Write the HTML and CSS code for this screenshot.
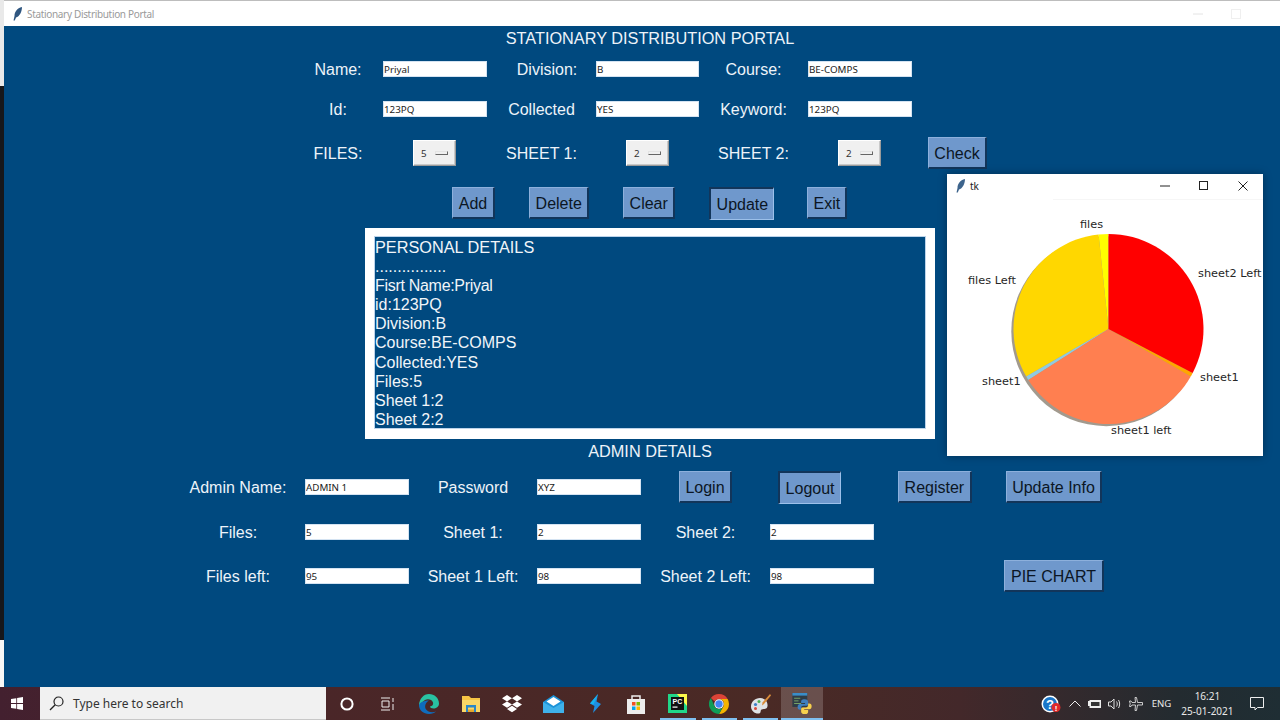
FILE: index.html

```html
<!DOCTYPE html>
<html lang="en">
<head>
<meta charset="UTF-8">
<title>Stationary Distribution Portal</title>
<link rel="stylesheet" href="styles.css">
</head>
<body>
<div class="desktop">
  <div class="edge">
    <div class="edge-top"></div>
    <div class="edge-mid"></div>
    <div class="edge-bottom"></div>
  </div>

  <div class="window">
    <div class="titlebar">
      <svg class="feather" width="10" height="14" viewBox="0 0 10 14"><path d="M9 0C4 1 1.500 5 1.500 9L.5 13.500 1.800 13.500 3 10.500C6.500 9.500 9 5 9 0Z" fill="#2f5680"/></svg>
      <span class="titlebar-text">Stationary Distribution Portal</span>
      <span class="win-controls">
        <svg width="10" height="10" viewBox="0 0 10 10"><path d="M0 5H10" stroke="#e4e4e4"/></svg>
        <svg width="10" height="10" viewBox="0 0 10 10"><rect x=".5" y=".5" width="9" height="9" fill="none" stroke="#efefef"/></svg>
      </span>
    </div>

    <div class="app">
      <h1 class="heading">STATIONARY DISTRIBUTION PORTAL</h1>

      <div class="top-grid">
        <label>Name:</label>
        <input class="field" value="Priyal">
        <label class="shift">Division:</label>
        <input class="field" value="B">
        <label>Course:</label>
        <input class="field" value="BE-COMPS">
        <span></span>
        <span></span>

        <label>Id:</label>
        <input class="field" value="123PQ">
        <label>Collected</label>
        <input class="field" value="YES">
        <label>Keyword:</label>
        <input class="field" value="123PQ">
        <span></span>
        <span></span>

        <label>FILES:</label>
        <div class="option"><span>5</span><i class="option-mark"></i></div>
        <label>SHEET 1:</label>
        <div class="option"><span>2</span><i class="option-mark"></i></div>
        <label>SHEET 2:</label>
        <div class="option"><span>2</span><i class="option-mark"></i></div>
        <span></span>
        <button class="btn">Check</button>
      </div>

      <div class="actions">
        <button class="btn">Add</button>
        <button class="btn">Delete</button>
        <button class="btn">Clear</button>
        <button class="btn sunken">Update</button>
        <button class="btn">Exit</button>
      </div>

      <div class="details-frame">
        <div class="details">
          <div class="details-head">PERSONAL DETAILS</div>
          <div>................</div>
          <div class="tight">Fisrt Name:Priyal</div>
          <div>id:123PQ</div>
          <div>Division:B</div>
          <div>Course:BE-COMPS</div>
          <div>Collected:YES</div>
          <div>Files:5</div>
          <div>Sheet 1:2</div>
          <div>Sheet 2:2</div>
        </div>
      </div>

      <h2 class="heading admin-heading">ADMIN DETAILS</h2>

      <div class="admin-grid">
        <label class="first">Admin Name:</label>
        <input class="field lift" value="ADMIN 1">
        <label class="first">Password</label>
        <input class="field lift" value="XYZ">
        <button class="btn center">Login</button>
        <button class="btn sunken logout">Logout</button>
        <button class="btn register">Register</button>
        <button class="btn center">Update Info</button>

        <label>Files:</label>
        <input class="field" value="5">
        <label>Sheet 1:</label>
        <input class="field" value="2">
        <label>Sheet 2:</label>
        <input class="field" value="2">
        <span></span>
        <span></span>

        <label>Files left:</label>
        <input class="field" value="95">
        <label>Sheet 1 Left:</label>
        <input class="field" value="98">
        <label>Sheet 2 Left:</label>
        <input class="field" value="98">
        <span></span>
        <button class="btn center">PIE CHART</button>
      </div>
    </div>
  </div>

  <!-- matplotlib popup floats over the main window -->
  <div class="popup">
    <div class="popup-bar">
      <svg class="feather" width="10" height="14" viewBox="0 0 10 14"><path d="M9 0C4 1 1.500 5 1.500 9L.5 13.500 1.800 13.500 3 10.500C6.500 9.500 9 5 9 0Z" fill="#3d648c"/></svg>
      <span class="popup-title">tk</span>
      <span class="popup-controls">
        <svg width="10" height="10" viewBox="0 0 10 10"><path d="M0 5H10" stroke="#222"/></svg>
        <svg width="10" height="10" viewBox="0 0 10 10"><rect x=".5" y=".5" width="8" height="8" fill="none" stroke="#222"/></svg>
        <svg width="10" height="10" viewBox="0 0 10 10"><path d="M.5 .5L9.500 9.500M9.500 .5L.5 9.500" stroke="#222"/></svg>
      </span>
    </div>
    <svg class="pie" width="316" height="257" viewBox="0 0 316 257">
      <circle cx="159.300" cy="132.200" r="95" fill="#a29a8e"/>
      <path d="M161.500 130L161.500 35A95 95 0 0 0 151.570 35.520Z" fill="#ffff00"/>
      <path d="M161.500 130L151.570 35.520A95 95 0 0 0 79.230 177.500Z" fill="#ffd700"/>
      <path d="M161.500 130L79.230 177.500A95 95 0 0 0 81.300 180.900Z" fill="#8fcbe0"/>
      <path d="M161.500 130L81.300 180.900A95 95 0 0 0 243.770 177.500Z" fill="#ff7f50"/>
      <path d="M161.500 130L243.770 177.500A95 95 0 0 0 245.690 174Z" fill="#ffa500"/>
      <path d="M161.500 130L245.690 174A95 95 0 0 0 161.500 35Z" fill="#ff0000"/>
      <text x="133" y="29">files</text>
      <text x="21" y="85">files Left</text>
      <text x="251" y="78">sheet2 Left</text>
      <text x="253" y="182">sheet1</text>
      <text x="35" y="186">sheet1</text>
      <text x="164" y="235">sheet1 left</text>
    </svg>
  </div>

  <div class="taskbar">
    <div class="start">
      <svg width="12" height="13" viewBox="0 0 12 13"><path d="M0 2L5.300 1.200V6.100H0ZM6.100 1L12 0V6.100H6.100ZM0 6.900H5.300V11.800L0 11ZM6.100 6.900H12V13L6.100 12Z" fill="#fff"/></svg>
    </div>
    <div class="search">
      <svg width="15" height="15" viewBox="0 0 15 15"><circle cx="9.500" cy="5.500" r="4.500" fill="none" stroke="#222" stroke-width="1.200"/><path d="M6.200 8.800L1 14" stroke="#222" stroke-width="1.300"/></svg>
      <span>Type here to search</span>
    </div>

    <div class="task"><svg width="14" height="14" viewBox="0 0 14 14"><circle cx="7" cy="7" r="5.600" fill="none" stroke="#fff" stroke-width="2"/></svg></div>
    <div class="task"><svg width="14" height="14" viewBox="0 0 14 14"><path d="M0 1H9M0 13H9M1 4H8V10H1ZM12 1V5M12 7V13" fill="none" stroke="#eee" stroke-width="1"/></svg></div>
    <div class="task"><svg width="20" height="20" viewBox="0 0 20 20"><path d="M10 0C15.500 0 20 4 20 9.500 20 13 17 14.500 14.500 14.500 12.500 14.500 11 13.500 11 12.500 13.500 12 14.500 10.500 14 8.500 13 5.500 9 4.500 6 6 2.500 8 1 11 0 13-.5 6 4 0 10 0Z" fill="#29c2a2"/><path d="M0 11C0 16.500 4.500 20 10 20 13 20 15.500 19 17 17.500 13 19 8 18 6.500 14.500 5.500 11.500 7 8 10 6.500 5.500 6.500 1 8 0 11Z" fill="#0f6cbd"/></svg></div>
    <div class="task"><svg width="20" height="20" viewBox="0 0 20 20"><path d="M1 2H8L10 4H19V18H1Z" fill="#f6c445"/><path d="M1 6H19V18H1Z" fill="#fbd767"/><path d="M5 11H15V18H13V13.500H7V18H5Z" fill="#2b88c9"/><rect x="7" y="15.500" width="6" height="2.500" fill="#e5a82e"/></svg></div>
    <div class="task"><svg width="20" height="18" viewBox="0 0 20 18"><path d="M5 0L10 3.200 5 6.400 0 3.200ZM15 0L20 3.200 15 6.400 10 3.200ZM5 6.400L10 9.600 5 12.800 0 9.600ZM15 6.400L20 9.600 15 12.800 10 9.600ZM5 14L10 10.800 15 14 10 17.200Z" fill="#fff"/></svg></div>
    <div class="task"><svg width="21" height="18" viewBox="0 0 21 18"><path d="M0 7L10.500 0 21 7V18H0Z" fill="#1b93d8"/><path d="M3.500 6.500L10.500 2 17.500 6.500 10.500 11Z" fill="#fff"/><path d="M0 7L10.500 13 21 7V18H0Z" fill="#3fb1ea"/></svg></div>
    <div class="task"><svg width="11" height="19" viewBox="0 0 11 19"><path d="M8 0L0 9.500 4.500 12 3 19 11 10 6.500 7.500Z" fill="#1f8fe0"/><path d="M8 0L0 9.500 3.500 10.500Z" fill="#16b4f0"/></svg></div>
    <div class="task"><svg width="20" height="20" viewBox="0 0 20 20"><rect x="1" y="5" width="18" height="15" fill="#ededed"/><path d="M6 5V2H14V5" fill="none" stroke="#ededed" stroke-width="1.500"/><rect x="6" y="8" width="3.500" height="3.500" fill="#f25022"/><rect x="10.500" y="8" width="3.500" height="3.500" fill="#7fba00"/><rect x="6" y="12.500" width="3.500" height="3.500" fill="#00a4ef"/><rect x="10.500" y="12.500" width="3.500" height="3.500" fill="#ffb900"/></svg></div>
    <div class="task running"><svg width="19" height="19" viewBox="0 0 19 19"><path d="M0 0H19V19H0Z" fill="#21d789"/><path d="M9 0H19V12Z" fill="#fcf84a"/><rect x="3" y="3" width="13" height="13" fill="#111"/><text class="pc" x="4.500" y="10">PC</text><rect x="4.500" y="12.500" width="5" height="1.200" fill="#fff"/></svg></div>
    <div class="task running"><svg width="20" height="20" viewBox="0 0 20 20"><path d="M10 0A10 10 0 0 1 18.660 5H10A5 5 0 0 0 5.670 7.500L1.900 4.100A10 10 0 0 1 10 0Z" fill="#db4437"/><path d="M18.660 5A10 10 0 0 1 10 20L14.330 12.500A5 5 0 0 0 10 5Z" fill="#f4b400"/><path d="M1.900 4.100L5.670 12.500A5 5 0 0 0 14.330 12.500L10 20A10 10 0 0 1 1.900 4.100Z" fill="#0f9d58"/><circle cx="10" cy="10" r="4.700" fill="#fff"/><circle cx="10" cy="10" r="3.700" fill="#4285f4"/></svg></div>
    <div class="task running"><svg width="20" height="20" viewBox="0 0 20 20"><path d="M9 4C4 4 0 8 0 12.500 0 17 4 20 8 19.500 10.500 19 9 16.500 10.500 15.500 12.500 14.500 16 16 16.500 12 17 8 14 4 9 4Z" fill="#dfe3e6"/><circle cx="4.500" cy="10.500" r="1.600" fill="#3c7fc8"/><circle cx="8" cy="7.500" r="1.500" fill="#4bb04f"/><circle cx="4.500" cy="14.500" r="1.500" fill="#d64a3b"/><path d="M19 0L20 1.500 13 10 11 11.500 11.500 8.500Z" fill="#d98c3a"/></svg></div>
    <div class="task running active"><svg width="20" height="21" viewBox="0 0 22 24"><rect x="0" y="0" width="17" height="16" fill="#2f3d47"/><rect x="0" y="0" width="17" height="3" fill="#3a8dc8"/><path d="M2 6H9M2 9H7M2 12H10" stroke="#7fb069"/><path d="M14 7C10.500 7 10 8.500 10 10V11.500H14.500V12.500H8.500C7 12.500 6 14 6 16S7 19 8.500 19H10V17C10 15.500 11 14.500 12.500 14.500H16C17.500 14.500 18 13.500 18 12.500V10C18 8.500 17 7 14 7Z" fill="#3f7fbf"/><path d="M14 24C17.500 24 18 22.500 18 21V19.500H13.500V18.500H19.500C21 18.500 22 17 22 15S21 12 19.500 12H18V14C18 15.500 17 16.500 15.500 16.500H12C10.500 16.500 10 17.500 10 18.500V21C10 22.500 11 24 14 24Z" fill="#f7d04d"/></svg></div>

    <div class="tray">
      <svg class="tray-help" width="20" height="18" viewBox="0 0 20 18"><circle cx="9" cy="9" r="8.500" fill="#fff"/><circle cx="9" cy="9" r="7" fill="#1a76c9"/><text class="help-q" x="9" y="13.500">?</text><circle cx="15" cy="12.500" r="4.500" fill="#e02b2b"/><text class="help-bang" x="15" y="15.500">!</text></svg>
      <svg class="tray-chevron" width="12" height="7" viewBox="0 0 12 7"><path d="M.5 6.500L6 1 11.500 6.500" fill="none" stroke="#eee"/></svg>
      <svg class="tray-icon" width="13" height="9" viewBox="0 0 13 9"><path d="M0 2H1.500V1H13V9H1.500V7H0Z" fill="#eee"/><rect x="3" y="3" width="8.500" height="4" fill="#333"/></svg>
      <svg class="tray-icon" width="14" height="12" viewBox="0 0 14 12"><path d="M.5 4H3L6 1V11L3 8H.5ZM8.500 3.500C9.500 5 9.500 7 8.500 8.500M10.500 2C12 4 12 8 10.500 10" fill="none" stroke="#ddd"/></svg>
      <svg class="tray-icon" width="14" height="14" viewBox="0 0 14 14"><path d="M6 .5H7.500L8.500 5.500H13.500V8H8.500L7.500 13.500H6L6.500 8H3L2 9.500H.5L1.200 6.800.5 4H2L3 5.500H6.500Z" fill="none" stroke="#ddd" stroke-width=".9"/></svg>
      <span class="tray-lang">ENG</span>
      <div class="clock"><span>16:21</span><span>25-01-2021</span></div>
      <svg class="tray-note" width="14" height="14" viewBox="0 0 14 14"><path d="M.5 .5H13.500V10.500H7.500L5 13V10.500H.5Z" fill="none" stroke="#eee"/></svg>
    </div>
  </div>
</div>
</body>
</html>
```

FILE: styles.css

```css
* {
  box-sizing: border-box;
}
html, body {
  margin: 0;
  height: 720px;
  overflow: hidden;
}
body {
  font-family: "Liberation Sans", Arial, sans-serif;
  background: #00497f;
}
.desktop {
  position: relative;
  display: grid;
  grid-template-columns: 4px 1fr;
  grid-template-rows: 687px 33px;
  height: 720px;
}

/* sliver of the window behind */
.edge {
  display: flex;
  flex-direction: column;
}
.edge-top {
  height: 86px;
  background: #e9e9e9;
}
.edge-mid {
  flex: 1;
  background: #17171a;
}
.edge-bottom {
  height: 47px;
  background: #f7f7f7;
}

.window {
  display: flex;
  flex-direction: column;
  min-width: 0;
  background: #00497f;
}
.titlebar {
  display: flex;
  align-items: center;
  height: 26px;
  flex-shrink: 0;
  padding-left: 9px;
  background: #fff;
  border-top: 1px solid #bdbdbd;
}
.titlebar-text {
  margin-left: 4px;
  font-family: "Noto Sans", sans-serif;
  font-size: 10px;
  letter-spacing: -.33px;
  color: #9a9a9a;
}
.win-controls {
  display: flex;
  gap: 28px;
  margin-left: auto;
  margin-right: 39px;
}

.heading {
  margin: 0;
  padding: 2px 0 0 16px;
  height: 22px;
  line-height: 20px;
  font-size: 16.3px;
  font-weight: normal;
  text-align: center;
  color: #edf3f9;
}
.admin-heading {
  margin-top: 1px;
  padding-top: 1px;
}

.top-grid,
.admin-grid {
  display: grid;
  align-items: center;
  justify-items: center;
  row-gap: 16px;
  margin-top: 9px;
}
.top-grid {
  grid-template-columns: 90px 104px 109px 103px 109px 104px 16px 59px;
  grid-template-rows: 24px 24px 32px;
  margin-left: 289px;
  width: max-content;
}
.admin-grid {
  grid-template-columns: 134px 104px 128px 104px 129px 104px 130px 100px;
  grid-template-rows: 33px 24px 32px;
  margin-left: 167px;
  width: max-content;
}
label {
  padding-top: 2px;
  font-size: 16px;
  color: #edf3f9;
  white-space: nowrap;
}
.first {
  padding-top: 1px;
}
.shift {
  padding-left: 11px;
}

.field {
  width: 100%;
  height: 16px;
  padding: 0;
  border: 1px solid #d4e3f2;
  border-radius: 0;
  outline: none;
  background: #fff;
  font-family: "Noto Sans", sans-serif;
  font-size: 9.8px;
  color: #222;
}
.lift {
  align-self: start;
  margin-top: 8px;
}

.option {
  display: flex;
  align-items: center;
  justify-self: start;
  width: 43px;
  height: 26px;
  margin: 0 0 0 30px;
  padding-left: 7px;
  background: #f0f0f0;
  border: 1px solid;
  border-color: #fff #9a9a9a #9a9a9a #fff;
  box-shadow: inset -1px -1px 0 #c9c9c9;
  font-family: "Noto Sans", sans-serif;
  font-size: 9.8px;
  color: #333;
}
.option-mark {
  display: block;
  width: 13px;
  height: 4px;
  margin-left: 8px;
  background: #f0f0f0;
  border: 1px solid;
  border-color: #e4e4e4 #666 #666 #e4e4e4;
}

.btn {
  align-self: start;
  height: 32px;
  padding: 2px 5.6px 0;
  background: #6f98cc;
  border: solid;
  border-width: 1px 2px 2px 1px;
  border-color: #8db0dc #12355a #12355a #8db0dc;
  border-radius: 0;
  font-family: "Liberation Sans", Arial, sans-serif;
  font-size: 16px;
  color: #0b1624;
  white-space: nowrap;
}
.sunken {
  height: 33px;
  padding-top: 1px;
  border-width: 2px 1px 1px 2px;
  border-color: #12355a #9cc0ea #9cc0ea #12355a;
}
.logout {
  justify-self: start;
  margin-left: 8px;
}
.register {
  justify-self: start;
  margin-left: 24px;
}

.actions {
  display: flex;
  align-items: flex-start;
  gap: 34px;
  height: 33px;
  margin: 18px 0 0 448px;
}
.actions .btn:nth-child(1) { width: 43px; }
.actions .btn:nth-child(2) { width: 60px; }
.actions .btn:nth-child(3) { width: 52px; }
.actions .btn:nth-child(4) { width: 65px; margin-right: -1px; }
.actions .btn:nth-child(5) { width: 40px; }

.details-frame {
  width: 570px;
  height: 211px;
  margin: 8px 0 0 361px;
  padding: 8px 9px 10px;
  background: #fff;
}
.details {
  height: 193px;
  padding: 1px 0 0;
  background: #00497f;
  border: 1px solid #bcd3ea;
  font-size: 16px;
  line-height: 19.1px;
  color: #f1f5f9;
}
.details-head {
  font-size: 16.3px;
}
.tight {
  letter-spacing: -.3px;
}

.popup {
  position: absolute;
  left: 947px;
  top: 174px;
  width: 316px;
  height: 282px;
  background: #fff;
  box-shadow: 0 0 8px rgba(0, 0, 0, .35);
}
.popup::after {
  content: "";
  position: absolute;
  top: 25px;
  left: 106px;
  right: 0;
  height: 1px;
  background: #f6f6f6;
}
.popup-bar {
  display: flex;
  align-items: center;
  height: 23px;
  margin-bottom: 2px;
  padding-left: 9px;
}
.popup-title {
  margin-left: 4px;
  font-family: "Noto Sans", sans-serif;
  font-size: 10px;
  color: #222;
}
.popup-controls {
  display: flex;
  gap: 29px;
  margin-left: auto;
  margin-right: 15px;
}
.pie {
  display: block;
}
.pie text {
  font-family: "DejaVu Sans", sans-serif;
  font-size: 11.3px;
  fill: #262626;
}

.taskbar {
  grid-column: 1 / -1;
  display: flex;
  align-items: center;
  background: linear-gradient(90deg, #43202f 0%, #4a2628 25%, #4a2a25 60%, #43282a 75%, #232b30 92%, #1f2e34 100%);
}
.start {
  display: flex;
  align-items: center;
  justify-content: center;
  width: 33px;
  margin-right: 7px;
}
.search {
  display: flex;
  align-items: center;
  gap: 9px;
  width: 286px;
  height: 33px;
  padding-left: 9px;
  background: #f1f1f1;
  border-bottom: 1px solid #c8c8c8;
  font-family: "Noto Sans", sans-serif;
  font-size: 12px;
  color: #333;
}
.task {
  position: relative;
  display: flex;
  align-items: center;
  justify-content: center;
  width: 41.4px;
  height: 33px;
}
.running::after {
  content: "";
  position: absolute;
  left: 3px;
  right: 3px;
  bottom: 0;
  height: 2px;
  background: #7fc0f0;
}
.active {
  background: rgba(255, 255, 255, .18);
}
.active::after {
  left: 0;
  right: 0;
}
.pc {
  font-family: "Liberation Sans", sans-serif;
  font-size: 7px;
  font-weight: bold;
  fill: #fff;
}

.tray {
  display: flex;
  align-items: center;
  margin-left: 218px;
  color: #e8e8e8;
}
.tray-chevron {
  margin-left: 8px;
}
.tray-icon {
  margin-left: 7px;
}
.tray-lang {
  margin-left: 9px;
  font-family: "Noto Sans", sans-serif;
  font-size: 9.6px;
}
.clock {
  display: flex;
  flex-direction: column;
  align-items: center;
  gap: 1px;
  margin-left: 10px;
  font-family: "Noto Sans", sans-serif;
  font-size: 10px;
  line-height: 14px;
}
.tray-note {
  margin-left: 16px;
}
.help-q {
  font-family: "Liberation Sans", sans-serif;
  font-size: 13px;
  font-weight: bold;
  fill: #fff;
  text-anchor: middle;
}
.help-bang {
  font-family: "Liberation Sans", sans-serif;
  font-size: 8px;
  font-weight: bold;
  fill: #fff;
  text-anchor: middle;
}
```
